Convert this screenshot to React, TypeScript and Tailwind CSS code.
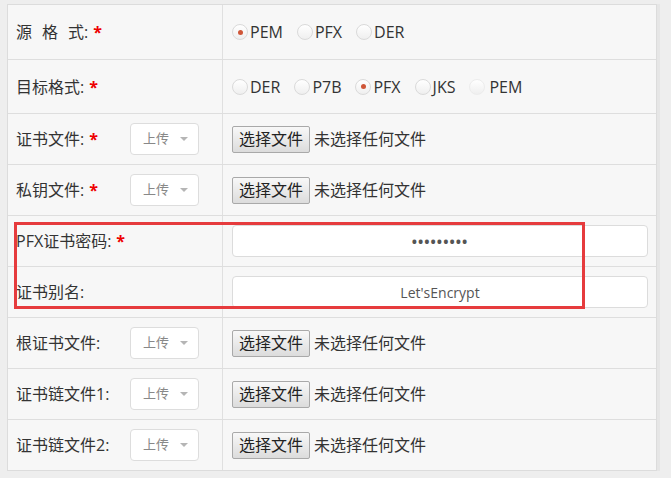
import React from "react";

const FONT = { fontFamily: '"Open Sans","Noto Sans CJK SC",sans-serif' };

function Star() {
  return <span className="text-[#e00] ml-[5px] font-bold">*</span>;
}

function Radio({ label, checked, faint }: { label: string; checked?: boolean; faint?: boolean }) {
  return (
    <span className="flex items-center mr-[14px]">
      <span
        className={
          "w-[16px] h-[16px] rounded-full border bg-gradient-to-b from-white to-[#efefef] flex items-center justify-center " +
          (faint ? "border-[#ececec] mr-[4px]" : "border-[#dadada] mr-[2px]")
        }
      >
        {checked && <span className="w-[5px] h-[5px] rounded-full bg-[#cf5638]" />}
      </span>
      <span className="text-[#333] text-[16px]">{label}</span>
    </span>
  );
}

function Upload() {
  return (
    <span className="w-[69px] h-[32px] rounded-[4px] border border-[#dddddd] bg-white flex items-center pl-[12px] text-[13px] text-[#888]">
      上传
      <span className="ml-[11px] w-0 h-0 border-l-[4px] border-r-[4px] border-t-[4px] border-l-transparent border-r-transparent border-t-[#b5b5b5]" />
    </span>
  );
}

function FileInput() {
  return (
    <div className="flex items-center">
      <span className="h-[27px] px-[6px] border border-[#a9a9a9] rounded-[2px] bg-gradient-to-b from-[#f8f8f8] to-[#dcdcdc] flex items-center text-[16px] text-[#222]">
        选择文件
      </span>
      <span className="ml-[4px] text-[16px] text-[#333]">未选择任何文件</span>
    </div>
  );
}

function TextBox({ children }: { children: React.ReactNode }) {
  return (
    <div className="w-[416px] h-[32px] rounded-[4px] border border-[#dcdcdc] bg-white flex items-center justify-center text-[14px] text-[#555]">
      {children}
    </div>
  );
}

type Row = { label: React.ReactNode; upload?: boolean; h: string; right: React.ReactNode };

export default function App() {
  const rows: Row[] = [
    {
      label: (
        <>
          <span className="mr-[10px]">源</span>
          <span className="mr-[10px]">格</span>
          <span>式:</span>
          <Star />
        </>
      ),
      h: "h-[54px]",
      right: (
        <div className="flex items-center">
          <Radio label="PEM" checked />
          <Radio label="PFX" />
          <Radio label="DER" />
        </div>
      ),
    },
    {
      label: (
        <>
          目标格式:
          <Star />
        </>
      ),
      h: "h-[54px]",
      right: (
        <div className="flex items-center">
          <Radio label="DER" />
          <Radio label="P7B" />
          <Radio label="PFX" checked />
          <Radio label="JKS" />
          <Radio label="PEM" faint />
        </div>
      ),
    },
    {
      label: (
        <>
          证书文件:
          <Star />
        </>
      ),
      upload: true,
      h: "h-[51px]",
      right: <FileInput />,
    },
    {
      label: (
        <>
          私钥文件:
          <Star />
        </>
      ),
      upload: true,
      h: "h-[51px]",
      right: <FileInput />,
    },
    {
      label: (
        <>
          PFX证书密码:
          <Star />
        </>
      ),
      h: "h-[51px]",
      right: (
        <TextBox>
          <span className="text-[14px] tracking-[1px] text-[#555] font-bold">•••••••••</span>
        </TextBox>
      ),
    },
    {
      label: <>证书别名:</>,
      h: "h-[51px]",
      right: <TextBox>Let'sEncrypt</TextBox>,
    },
    { label: <>根证书文件:</>, upload: true, h: "h-[51px]", right: <FileInput /> },
    { label: <>证书链文件1:</>, upload: true, h: "h-[51px]", right: <FileInput /> },
    { label: <>证书链文件2:</>, upload: true, h: "h-[51px]", right: <FileInput /> },
  ];

  return (
    <div className="w-[671px] h-[478px] bg-[#eeeeee] pt-[4px] pl-[7px] relative overflow-hidden" style={FONT}>
      <div className="w-[650px] border border-[#dcdcdc] bg-[#f7f7f7] shadow-[3px_0_0_#e6e6e6]">
        {rows.map((r, i) => (
          <div
            key={i}
            className={"grid grid-cols-[215px_1fr] " + r.h + (i > 0 ? " border-t border-[#dedede]" : "")}
          >
            <div className="flex items-center pl-[8px] border-r border-[#e0e0e0] text-[16px] text-[#333]">
              <span className="w-[114px] flex items-center whitespace-nowrap">{r.label}</span>
              {r.upload && <Upload />}
            </div>
            <div className="flex items-center pl-[9px]">{r.right}</div>
          </div>
        ))}
      </div>
      <div className="absolute left-[14px] top-[222px] w-[571px] h-[87px] border-[3px] border-[#e63b3d] pointer-events-none" />
    </div>
  );
}
